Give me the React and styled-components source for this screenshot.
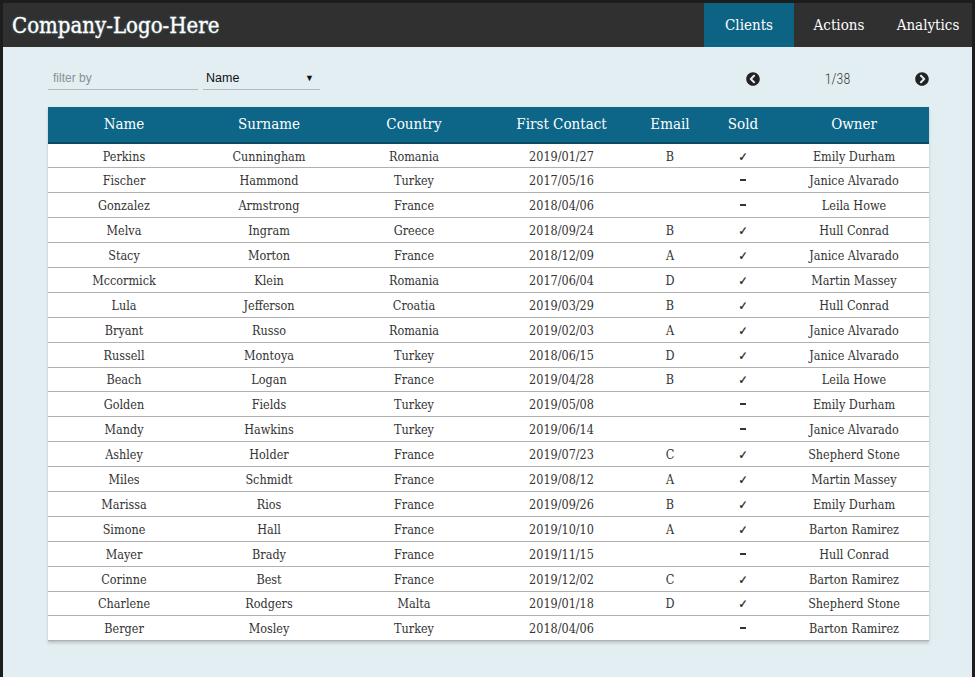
import React from "react";
import styled, { createGlobalStyle } from "styled-components";
import { FaChevronCircleLeft, FaChevronCircleRight } from "react-icons/fa";

const GlobalStyle = createGlobalStyle`
  html, body {
    margin: 0;
    padding: 0;
    background: #e2eef2;
  }
  * { box-sizing: border-box; }
`;

const slab = `"DejaVu Serif Condensed", "DejaVu Serif", serif`;

const Frame = styled.div`
  width: 975px;
  height: 677px;
  border: 3px solid #1d1d1d;
  border-bottom: none;
  background: #e2eef2;
  display: flex;
  flex-direction: column;
  font-family: ${slab};
  font-stretch: condensed;
  overflow: hidden;
`;

const TopBar = styled.header`
  height: 44px;
  background: #303030;
  display: flex;
  align-items: stretch;
  justify-content: space-between;
`;

const Logo = styled.div`
  color: #fff;
  font-size: 22px;
  padding-left: 9px;
  display: flex;
  align-items: center;
  -webkit-text-stroke: 0.3px #fff;
  text-shadow: 0 0 3px rgba(120, 200, 230, 0.35);
`;

const Nav = styled.nav`
  display: flex;
`;

const NavItem = styled.a`
  display: flex;
  align-items: center;
  justify-content: center;
  width: ${p => p.w}px;
  color: #fff;
  font-size: 15px;
  background: ${p => (p.active ? "#0d6384" : "transparent")};
`;

const Main = styled.main`
  padding: 19px 43px 0 45px;
`;

const Toolbar = styled.div`
  display: flex;
  align-items: flex-end;
  height: 24px;
  margin-bottom: 17px;
`;

const Filter = styled.input`
  width: 150px;
  border: none;
  border-bottom: 1px solid #b3b9bc;
  background: transparent;
  font-family: "Liberation Sans", Arial, sans-serif;
  font-size: 12px;
  padding: 0 0 4px 5px;
  outline: none;
  &::placeholder { color: #8a8f92; }
`;

const Select = styled.div`
  margin-left: 5px;
  width: 117px;
  border-bottom: 1px solid #b3b9bc;
  display: flex;
  justify-content: space-between;
  padding: 0 6px 3px 3px;
  font-family: "Liberation Sans", Arial, sans-serif;
  font-size: 12.5px;
  color: #111;
`;

const Arrow = styled.span`
  font-size: 9px;
  line-height: 15px;
`;

const Pager = styled.div`
  margin-left: auto;
  width: 183px;
  display: flex;
  align-items: center;
  justify-content: space-between;
  color: #333;
  font-family: "Roboto", sans-serif;
  font-weight: 300;
  font-size: 14px;
  padding-bottom: 3px;
  svg { color: #222; }
`;

const Table = styled.table`
  width: 881px;
  border-collapse: collapse;
  background: #fff;
  box-shadow: 0 2px 3px rgba(0, 0, 0, 0.18);
  table-layout: fixed;
`;

const Head = styled.th`
  background: #0d6587;
  color: #fff;
  font-weight: normal;
  font-size: 15px;
  height: 36px;
  padding: 0 0 1px;
  text-align: center;
  border-bottom: 2px solid #0a4a62;
`;

const Row = styled.tr`
  border-bottom: 1px solid #b0b0b0;
`;

const Cell = styled.td`
  height: 24.9px;
  padding: 1px 0 0;
  text-align: center;
  font-size: 12.5px;
  color: #333;
`;

const Check = styled.span`
  font-family: "DejaVu Sans", sans-serif;
  font-size: 12px;
  color: #222;
  -webkit-text-stroke: 0.3px #222;
`;

const Dash = styled.span`
  display: inline-block;
  width: 6px;
  height: 2px;
  background: #333;
  vertical-align: 4px;
`;

const cols = [152, 138, 152, 143, 74, 72, 150];
const heads = ["Name", "Surname", "Country", "First Contact", "Email", "Sold", "Owner"];

const rows = [
  ["Perkins", "Cunningham", "Romania", "2019/01/27", "B", 1, "Emily Durham"],
  ["Fischer", "Hammond", "Turkey", "2017/05/16", "", 0, "Janice Alvarado"],
  ["Gonzalez", "Armstrong", "France", "2018/04/06", "", 0, "Leila Howe"],
  ["Melva", "Ingram", "Greece", "2018/09/24", "B", 1, "Hull Conrad"],
  ["Stacy", "Morton", "France", "2018/12/09", "A", 1, "Janice Alvarado"],
  ["Mccormick", "Klein", "Romania", "2017/06/04", "D", 1, "Martin Massey"],
  ["Lula", "Jefferson", "Croatia", "2019/03/29", "B", 1, "Hull Conrad"],
  ["Bryant", "Russo", "Romania", "2019/02/03", "A", 1, "Janice Alvarado"],
  ["Russell", "Montoya", "Turkey", "2018/06/15", "D", 1, "Janice Alvarado"],
  ["Beach", "Logan", "France", "2019/04/28", "B", 1, "Leila Howe"],
  ["Golden", "Fields", "Turkey", "2019/05/08", "", 0, "Emily Durham"],
  ["Mandy", "Hawkins", "Turkey", "2019/06/14", "", 0, "Janice Alvarado"],
  ["Ashley", "Holder", "France", "2019/07/23", "C", 1, "Shepherd Stone"],
  ["Miles", "Schmidt", "France", "2019/08/12", "A", 1, "Martin Massey"],
  ["Marissa", "Rios", "France", "2019/09/26", "B", 1, "Emily Durham"],
  ["Simone", "Hall", "France", "2019/10/10", "A", 1, "Barton Ramirez"],
  ["Mayer", "Brady", "France", "2019/11/15", "", 0, "Hull Conrad"],
  ["Corinne", "Best", "France", "2019/12/02", "C", 1, "Barton Ramirez"],
  ["Charlene", "Rodgers", "Malta", "2019/01/18", "D", 1, "Shepherd Stone"],
  ["Berger", "Mosley", "Turkey", "2018/04/06", "", 0, "Barton Ramirez"],
];

export default function App() {
  return (
    <>
      <GlobalStyle />
      <Frame>
        <TopBar>
          <Logo>Company-Logo-Here</Logo>
          <Nav>
            <NavItem active w={90}>Clients</NavItem>
            <NavItem w={90}>Actions</NavItem>
            <NavItem w={88}>Analytics</NavItem>
          </Nav>
        </TopBar>
        <Main>
          <Toolbar>
            <Filter placeholder="filter by" />
            <Select>
              <span>Name</span>
              <Arrow>▼</Arrow>
            </Select>
            <Pager>
              <FaChevronCircleLeft size={14} />
              <span>1/38</span>
              <FaChevronCircleRight size={14} />
            </Pager>
          </Toolbar>
          <Table>
            <colgroup>
              {cols.map((w, i) => <col key={i} style={{ width: w }} />)}
            </colgroup>
            <thead>
              <tr>{heads.map(h => <Head key={h}>{h}</Head>)}</tr>
            </thead>
            <tbody>
              {rows.map((r, i) => (
                <Row key={i}>
                  <Cell>{r[0]}</Cell>
                  <Cell>{r[1]}</Cell>
                  <Cell>{r[2]}</Cell>
                  <Cell>{r[3]}</Cell>
                  <Cell>{r[4]}</Cell>
                  <Cell>{r[5] ? <Check>✓</Check> : <Dash />}</Cell>
                  <Cell>{r[6]}</Cell>
                </Row>
              ))}
            </tbody>
          </Table>
        </Main>
      </Frame>
    </>
  );
}
